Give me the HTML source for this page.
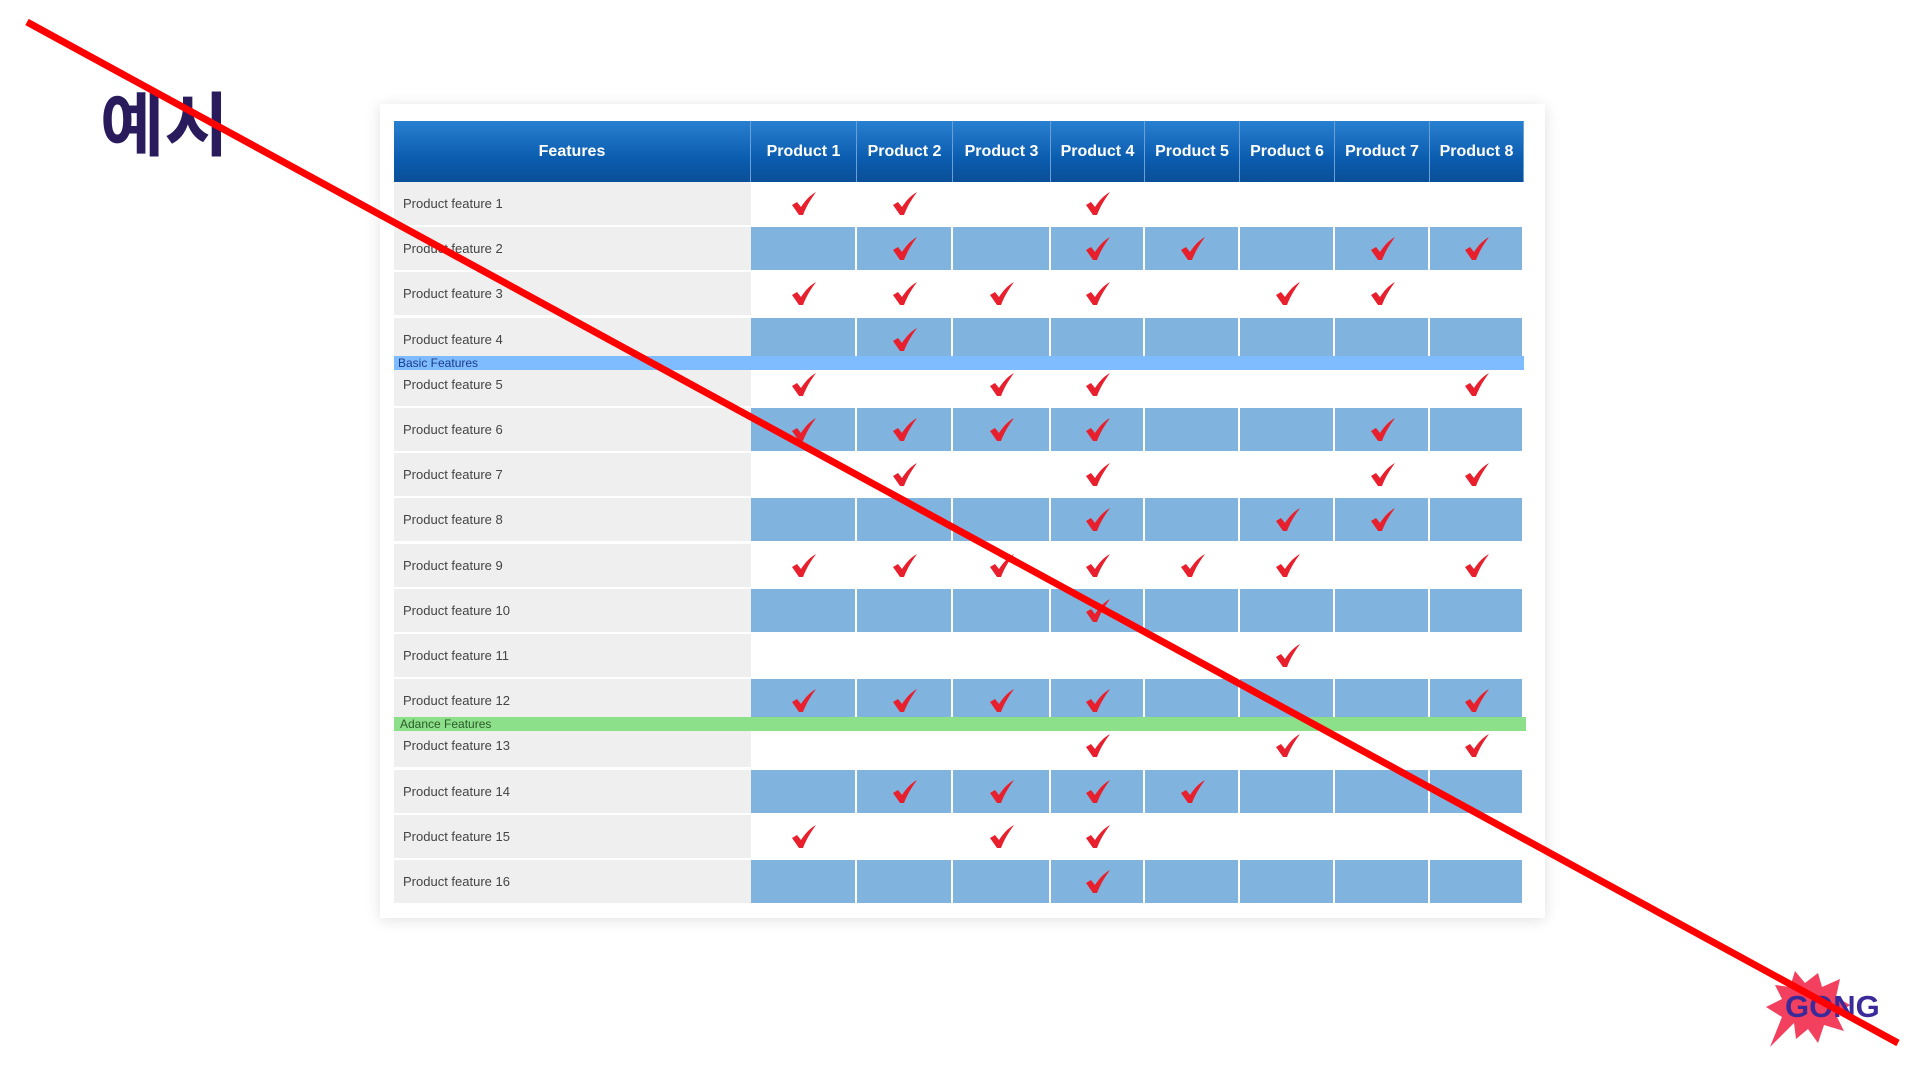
<!DOCTYPE html>
<html><head><meta charset="utf-8"><style>
body{margin:0;width:1920px;height:1068px;background:#fff;position:relative;overflow:hidden;font-family:"Liberation Sans","Noto Sans CJK KR",sans-serif}
.card{position:absolute;left:380px;top:104px;width:1165px;height:814px;background:#fff;box-shadow:0 2px 14px rgba(0,0,0,.12)}
.abs{position:absolute}
.hd{position:absolute;top:121px;height:61px;background:linear-gradient(#2a80d0,#0b5db0 60%,#0a4f98);color:#fff;font-weight:bold;font-size:16px;display:flex;align-items:center;justify-content:center;border-right:1px solid #6aa0d8;box-sizing:border-box}
.fc{position:absolute;left:394px;width:357px;background:#efefef;border-bottom:2px solid #fff;box-sizing:border-box;font-size:13px;color:#444;padding-left:9px;display:flex;align-items:center}
.pc{position:absolute;background:#80b4df;border-right:2px solid #fff;border-bottom:2px solid #fff;box-sizing:border-box}
.ck{position:absolute;width:26px;height:24px}
</style></head><body>
<div class="card"></div>
<div style="position:absolute;left:100px;top:70px;font-size:70px;font-weight:bold;color:#2a1c5c;letter-spacing:0">예시</div>
<div id="t"></div>
<svg class="abs" style="left:1760px;top:965px" width="130" height="90" viewBox="0 0 130 90">
<polygon points="15,20 30,22 35,6 45,18 58,8 62,22 80,14 76,32 90,40 76,50 84,66 64,60 58,78 48,64 36,74 34,58 10,82 22,52 6,42 22,34" fill="#f2405e"/>
<text x="25" y="52" font-family="Liberation Sans" font-weight="bold" font-size="31" fill="#3a2a9a">GONG</text>
</svg>
<svg class="abs" style="left:0;top:0" width="1920" height="1068"><line x1="27" y1="22" x2="1898" y2="1043" stroke="#f00" stroke-width="7"/></svg>
<script>
var cols=[751,857,953,1051,1145,1240,1335,1430,1524];
var h='<div class="hd" style="left:394px;width:357px">Features</div>';
for(var i=0;i<8;i++)h+='<div class="hd" style="left:'+cols[i]+'px;width:'+(cols[i+1]-cols[i])+'px">Product '+(i+1)+'</div>';
var ck=[[1,2,4],[2,4,5,7,8],[1,2,3,4,6,7],[2],[1,3,4,8],[1,2,3,4,7],[2,4,7,8],[4,6,7],[1,2,3,4,5,6,8],[4],[6],[1,2,3,4,8],[4,6,8],[2,3,4,5],[1,3,4],[4]];
var svg='<svg viewBox="0 0 26 24" width="26" height="24"><path d="M1,13 L6,10 L10,15 C14,9 18,4 25,0 C20,7 16,13 12,23 L8,23 Z" fill="#e8202e"/></svg>';
for(var r=0;r<16;r++){
 var yy=Math.round(182+r*45.2),hh=45;
 h+='<div class="fc" style="top:'+yy+'px;height:'+hh+'px">Product feature '+(r+1)+'</div>';
 if(r%2==1)for(var i=0;i<8;i++)h+='<div class="pc" style="left:'+cols[i]+'px;top:'+yy+'px;width:'+(cols[i+1]-cols[i])+'px;height:'+hh+'px"></div>';
 ck[r].forEach(function(c){var cx=(cols[c-1]+cols[c])/2;h+='<div class="ck" style="left:'+(cx-13)+'px;top:'+(yy+10)+'px">'+svg+'</div>';});
}
h+='<div class="abs" style="left:394px;top:356px;width:1130px;height:14px;background:#7fbcff;font-size:12px;color:#1a3a8a;line-height:14px;padding-left:4px;box-sizing:border-box">Basic Features</div>';
h+='<div class="abs" style="left:394px;top:717px;width:1132px;height:14px;background:#8de08a;font-size:12px;color:#2a5a2a;line-height:14px;padding-left:6px;box-sizing:border-box">Adance Features</div>';
document.getElementById('t').innerHTML=h;
</script>
</body></html>
